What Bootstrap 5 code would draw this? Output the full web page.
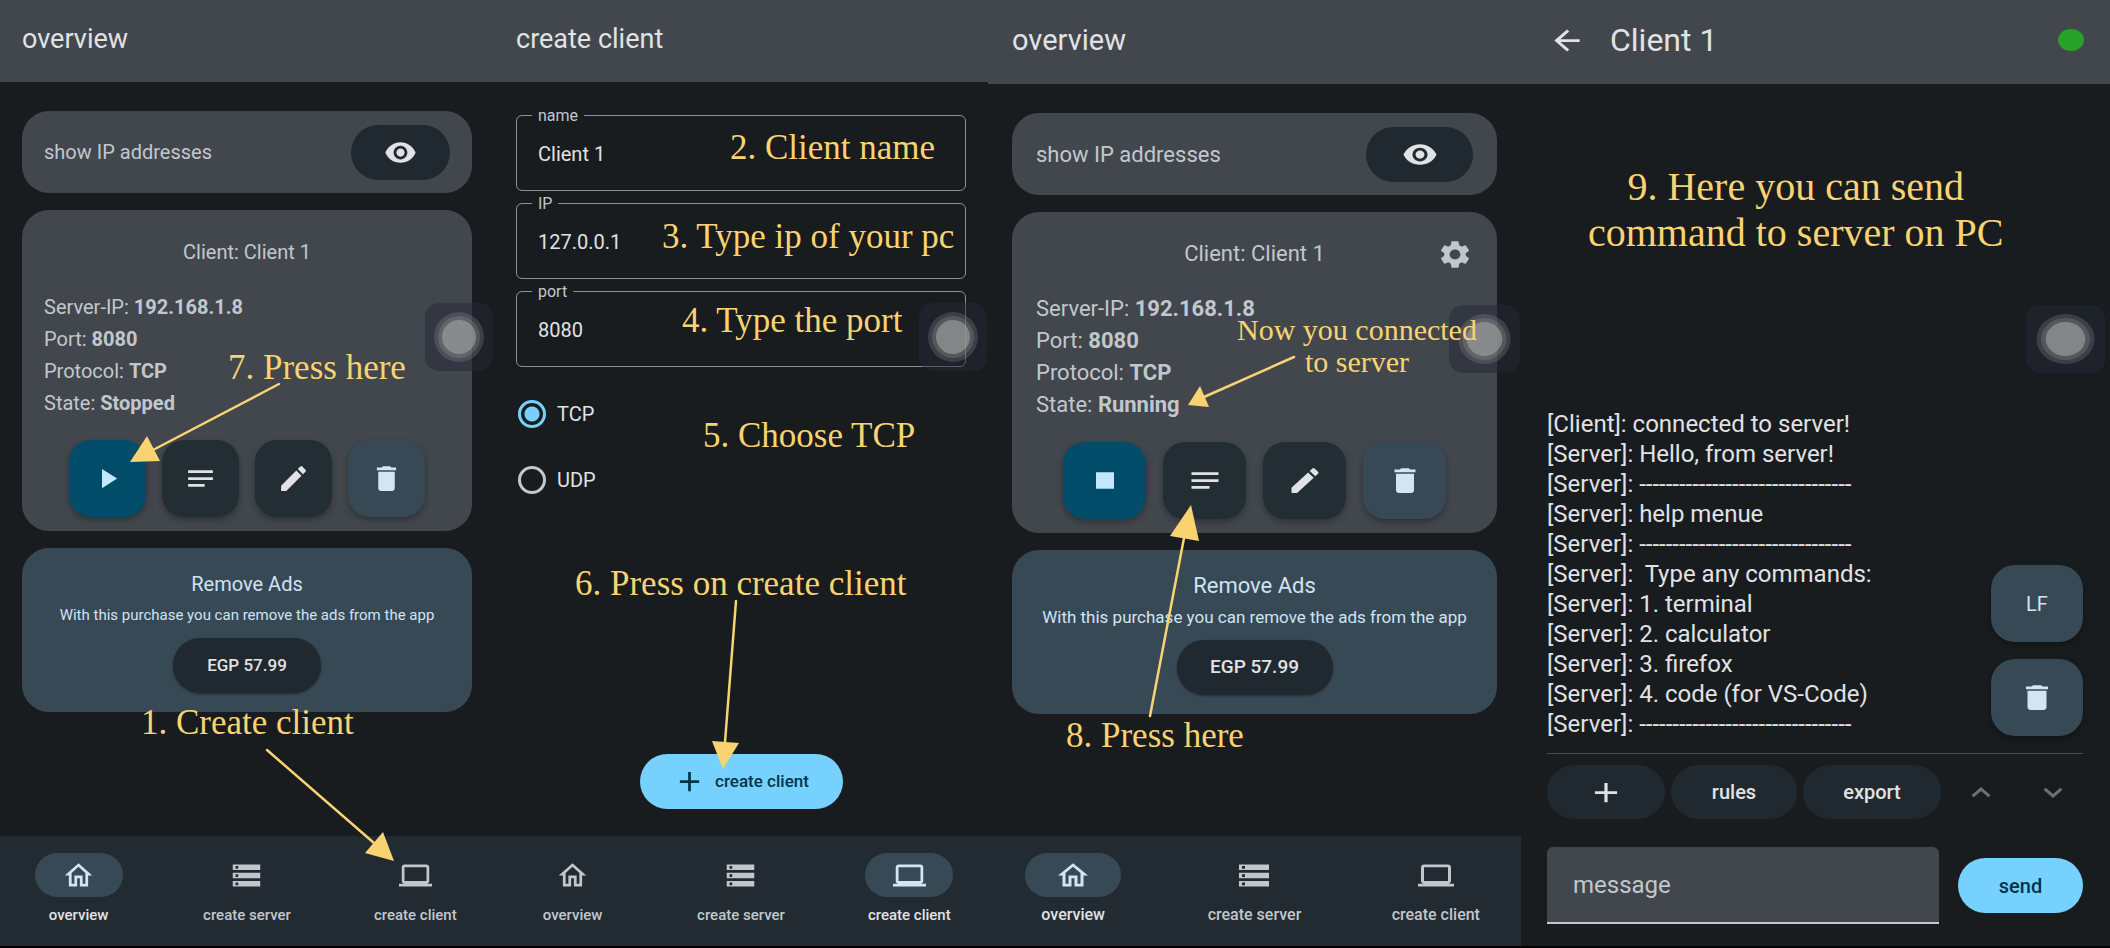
<!DOCTYPE html>
<html lang="en">
<head>
<meta charset="utf-8">
<meta name="viewport" content="width=device-width, initial-scale=1">
<title>Client setup guide</title>
<link href="https://cdn.jsdelivr.net/npm/bootstrap@5.3.0/dist/css/bootstrap.min.css" rel="stylesheet">
<style>
:root{--bg:#191c1e;--surface:#42474d;--tone:#384956;--deep:#20292f;--bar:#232b32;--ink:#e1e2e5;--soft:#c2c7ce;--sky:#77d1ff;--gold:#f9d372}
body{font-family:Roboto,"Liberation Sans",sans-serif;background:var(--bg);color:var(--ink)}
.guide{display:grid;grid-template-columns:494fr 494fr 533fr 589fr;min-height:100vh;border-bottom:2px solid #000}
.screen{--title:27px;--text:20px;--fine:15px;--label:17px;--tab:15px;--icon-w:33px;--pad:22px;--key-w:77px;--key-gap:16px;--pill-w:88px;--bar-h:82px;position:relative;display:flex;flex-direction:column;min-width:0;background:var(--bg)}
.screen-c{--title:29px;--text:22px;--fine:17px;--label:19px;--tab:16px;--icon-w:36px;--pad:24px;--key-w:83px;--key-gap:17px;--pill-w:96px;--bar-h:84px}
.screen-d{--title:32px;--text:24px;--label:20px;--icon-w:38px;--pad:26px;--key-w:92px;--bar-h:84px}
.topbar{height:var(--bar-h);padding:0 var(--pad) 4px;background:var(--surface);flex:none}
.topbar h1{font-size:var(--title);line-height:40px;font-weight:400;margin:0}
.icon{width:var(--icon-w);height:33px;fill:currentColor;display:block;flex:none}
.screen button,.screen .tab{border:0;padding:0;display:flex;align-items:center;justify-content:center}
.pane{padding:29px var(--pad) 0;gap:17px}
.tile{border-radius:27px;background:var(--surface);color:var(--soft);font-size:var(--text)}
.tile-row{height:82px;padding:0 var(--pad)}
.tile-main{padding:22px var(--pad) 14px}
.tile-ads{padding:24px 8px 19px;background:var(--tone);color:#cfe3f3;text-align:center}
.tile-title{line-height:40px;margin-bottom:19px;font-size:var(--text)}
.facts{line-height:32px;margin-bottom:21px}
.facts b{font-weight:700}
.eye{width:calc(var(--pill-w) + 11px);height:55px;border-radius:28px;background:var(--deep);color:var(--ink)}
.keys{gap:var(--key-gap)}
.key{width:var(--key-w);height:77px;border-radius:22px;background:#222d34;color:var(--ink);box-shadow:0 3px 6px rgba(0,0,0,.3)}
.key-go{background:#004c69;color:#c3e7ff}
.key-tone{background:var(--tone);color:#d3e5f5}
.ads-title{line-height:24px;margin-bottom:9px;font-size:var(--text)}
.ads-text{line-height:20px;margin-bottom:13px;font-size:var(--fine);white-space:nowrap}
.price{height:55px;padding:0;width:calc(var(--pill-w) + 60px);border-radius:28px;background:var(--deep);color:var(--ink);font-size:var(--label);font-weight:500;box-shadow:0 1px 3px rgba(0,0,0,.4)}
.tabs{display:grid;grid-template-columns:repeat(3,1fr);gap:11px;height:110px;padding-top:17px;background:var(--bar);margin-top:auto;flex:none}
.screen .tab{flex-direction:column;justify-content:flex-start;gap:8px;color:var(--soft);text-decoration:none;font-size:var(--tab);font-weight:500;line-height:20px}
.tab span{display:flex;align-items:center;justify-content:center;width:var(--pill-w);height:44px;border-radius:22px}
.tab.active{color:var(--ink)}
.tab.active span{background:var(--tone);color:#d3e5f5}
.field{position:relative}
.field label{position:absolute;left:16px;top:-9px;padding:0 6px;background:var(--bg);font-size:16px;line-height:20px;color:var(--soft)}
.field input{width:100%;height:76px;padding:2px 21px 0;border:1px solid #8c9198;border-radius:6px;background:transparent;color:var(--ink);font-size:20px;outline:0}
.fields{padding:33px var(--pad) 14px;gap:12px}
.choice{height:66px;padding-left:24px;gap:11px;font-size:20px}
.choice input{appearance:none;width:28px;height:28px;margin:0;border:3px solid var(--soft);border-radius:50%}
.choice input:checked{border-color:var(--sky);background:radial-gradient(circle,var(--sky) 7px,transparent 8px)}
.create{width:203px;height:55px;margin:auto auto 27px;gap:9px;border-radius:28px;background:var(--sky);color:#003549;font-size:17px;font-weight:500}
.create + .tabs{margin-top:0}
.assist{position:absolute;top:303px;right:1px;width:68px;height:68px;border-radius:14px;background:rgba(36,40,54,.5)}
.assist svg{width:100%;height:100%;display:block}
.screen-c .assist{top:305px;width:71px}
.screen-d .assist{top:305px;right:5px;width:79px}
.chatbar{gap:24px;padding-left:27px}
.dot{width:26px;height:22px;border-radius:50%;background:#28a228}
.console{padding:0 27px 14px 26px;margin-top:auto}
.log{font-size:var(--text);line-height:30px;white-space:pre}
.fabs{gap:17px;padding-bottom:3px}
.fabs .key{border-radius:24px;font-size:20px}
.tools{margin:0 27px 0 26px;border-top:1px solid #4a4f54;padding-top:11px;gap:6px}
.tool{height:54px;border-radius:27px;background:var(--deep);color:var(--ink);font-size:var(--label);font-weight:500}
.tool-add{width:118px}.tool-rules{width:126px}.tool-export{width:138px}
.steps{gap:12px}
.step{width:60px;height:54px;background:transparent;color:#6d7174}
.composer{margin:28px 27px 22px 26px;gap:19px}
.composer input{flex:1;min-width:0;height:77px;padding:0 26px;border:0;border-bottom:2px solid var(--soft);border-radius:6px 6px 0 0;background:var(--surface);color:var(--ink);font-size:var(--text);outline:0}
.composer input::placeholder{color:var(--soft);opacity:1}
.send{width:125px;height:55px;border-radius:28px;background:var(--sky);color:#003549;font-size:var(--label);font-weight:500}
/* hand-placed guide notes that lie over the screens */
.note{position:absolute;margin:0;color:var(--gold);font-family:"Liberation Serif",serif;font-size:35px;line-height:40px;white-space:nowrap;z-index:3}
.note-state{font-size:30px;line-height:32px;text-align:center}
.note-chat{font-size:40px;line-height:46px;text-align:center}
.n1{left:141px;top:703px}.n7{left:228px;top:348px}
.n2{left:236px;top:128px}.n3{left:168px;top:217px}.n4{left:188px;top:301px}.n5{left:209px;top:416px}.n6{left:81px;top:564px}
.n8{left:78px;top:716px}.ns{left:249px;top:314px}.n9{left:67px;top:164px}
.arrows{position:absolute;left:0;top:0;width:100%;height:100%;overflow:visible;pointer-events:none;fill:var(--gold);stroke:var(--gold);stroke-width:2.5;stroke-linecap:round;z-index:3}
.arrows polygon{stroke:none}
</style>
</head>
<body>
<svg class="d-none" aria-hidden="true">
<defs>
<path id="i-eye" d="M12 4.5C7 4.500 2.730 7.610 1 12c1.730 4.390 6 7.500 11 7.500s9.270-3.110 11-7.500c-1.730-4.390-6-7.500-11-7.500zM12 17c-2.760 0-5-2.240-5-5s2.240-5 5-5 5 2.240 5 5-2.240 5-5 5zm0-8c-1.660 0-3 1.340-3 3s1.340 3 3 3 3-1.340 3-3-1.340-3-3-3z"/>
<path id="i-play" d="M8 5v14l11-7z"/>
<path id="i-stop" d="M6 6h12v12H6z"/>
<path id="i-notes" d="M3 18h12v-2H3v2zM3 6v2h18V6H3zm0 7h18v-2H3v2z"/>
<path id="i-edit" d="M3 17.250V21h3.750L17.810 9.940l-3.750-3.750L3 17.250zM20.710 7.040c.39-.39.39-1.020 0-1.410l-2.340-2.340a.996.996 0 0 0-1.410 0l-1.830 1.830 3.750 3.750 1.830-1.830z"/>
<path id="i-trash" d="M6 19c0 1.100.9 2 2 2h8c1.100 0 2-.9 2-2V7H6v12zM19 4h-3.500l-1-1h-5l-1 1H5v2h14V4z"/>
<path id="i-home" d="M12 5.690l5 4.500V18h-2v-6H9v6H7v-7.810l5-4.500M12 3L2 12h3v8h6v-6h2v6h6v-8h3L12 3z"/>
<path id="i-server" d="M2 20h20v-4H2v4zm2-3h2v2H4v-2zM2 4v4h20V4H2zm4 3H4V5h2v2zm-4 7h20v-4H2v4zm2-3h2v2H4v-2z"/>
<path id="i-laptop" d="M20 18c1.100 0 1.990-.9 1.990-2L22 6c0-1.100-.9-2-2-2H4c-1.100 0-2 .9-2 2v10c0 1.100.9 2 2 2H0v2h24v-2h-4zM4 6h16v10H4V6z"/>
<path id="i-add" d="M19 13h-6v6h-2v-6H5v-2h6V5h2v6h6v2z"/>
<path id="i-back" d="M20 11H7.830l5.590-5.590L12 4l-8 8 8 8 1.410-1.410L7.830 13H20v-2z"/>
<path id="i-up" d="M12 8l-6 6 1.410 1.410L12 10.830l4.590 4.580L18 14z"/>
<path id="i-down" d="M16.590 8.590L12 13.170 7.410 8.590 6 10l6 6 6-6z"/>
<path id="i-gear" d="M19.140 12.940c.04-.3.060-.61.060-.94 0-.32-.02-.64-.07-.94l2.030-1.580c.18-.14.23-.41.120-.61l-1.920-3.320c-.12-.22-.37-.29-.59-.22l-2.390.96c-.5-.38-1.030-.7-1.620-.94l-.36-2.540c-.04-.24-.24-.41-.48-.41h-3.840c-.24 0-.43.17-.47.41l-.36 2.540c-.59.24-1.130.57-1.620.94l-2.390-.96c-.22-.08-.47 0-.59.22L2.740 8.870c-.12.21-.08.47.12.610l2.030 1.580c-.05.3-.09.63-.09.940s.02.640.070.940l-2.030 1.580c-.18.14-.23.41-.12.610l1.920 3.320c.12.220.37.290.59.220l2.390-.96c.5.380 1.030.700 1.620.940l.36 2.540c.05.240.24.410.48.410h3.840c.24 0 .44-.17.47-.41l.36-2.540c.59-.24 1.130-.56 1.620-.94l2.390.96c.22.080.47 0 .59-.22l1.920-3.320c.12-.22.070-.47-.12-.61l-2.010-1.580zM12 15.600c-1.980 0-3.600-1.620-3.600-3.600s1.620-3.600 3.600-3.600 3.600 1.620 3.600 3.600-1.620 3.600-3.600 3.600z"/>
<g id="i-touch"><circle cx="34" cy="34" r="25" fill="#aaa" fill-opacity=".22"/><circle cx="34" cy="34" r="21" fill="#bbb" fill-opacity=".2"/><circle cx="34" cy="34" r="17" fill="#a0a2a2" fill-opacity=".62"/></g>
</defs>
</svg>

<main class="guide">
  <section class="screen screen-a">
    <header class="topbar d-flex align-items-center"><h1>overview</h1></header>
    <div class="pane d-flex flex-column">
      <div class="tile tile-row d-flex align-items-center justify-content-between"><span>show IP addresses</span>
        <button class="eye" type="button" aria-label="Show IP addresses"><svg class="icon" viewBox="0 0 24 24"><use href="#i-eye"/></svg></button></div>
      <div class="tile tile-main">
        <div class="tile-title text-center">Client: Client 1</div>
        <div class="facts"><div>Server-IP: <b>192.168.1.8</b></div><div>Port: <b>8080</b></div><div>Protocol: <b>TCP</b></div><div>State: <b>Stopped</b></div></div>
        <div class="keys d-flex justify-content-center">
          <button class="key key-go" type="button" aria-label="Start"><svg class="icon" viewBox="0 0 24 24"><use href="#i-play"/></svg></button>
          <button class="key" type="button" aria-label="Console"><svg class="icon" viewBox="0 0 24 24"><use href="#i-notes"/></svg></button>
          <button class="key" type="button" aria-label="Edit"><svg class="icon" viewBox="0 0 24 24"><use href="#i-edit"/></svg></button>
          <button class="key key-tone" type="button" aria-label="Delete"><svg class="icon" viewBox="0 0 24 24"><use href="#i-trash"/></svg></button>
        </div>
      </div>
      <div class="tile tile-ads">
        <div class="ads-title">Remove Ads</div>
        <div class="ads-text">With this purchase you can remove the ads from the app</div>
        <button class="price mx-auto" type="button">EGP 57.99</button>
      </div>
    </div>
    <nav class="tabs">
      <a class="tab active" href="#"><span><svg class="icon" viewBox="0 0 24 24"><use href="#i-home"/></svg></span>overview</a>
      <a class="tab" href="#"><span><svg class="icon" viewBox="0 0 24 24"><use href="#i-server"/></svg></span>create server</a>
      <a class="tab" href="#"><span><svg class="icon" viewBox="0 0 24 24"><use href="#i-laptop"/></svg></span>create client</a>
    </nav>
    <div class="assist"><svg viewBox="0 0 68 68" preserveAspectRatio="none"><use href="#i-touch"/></svg></div>
    <p class="note n7">7. Press here</p>
    <p class="note n1">1. Create client</p>
    <svg class="arrows" aria-hidden="true"><path d="M279 384L153 450M267 750L374 843"/><polygon points="130,462 147,436 160,461"/><polygon points="394,861 383,832 365,853"/></svg>
  </section>

  <section class="screen screen-b">
    <header class="topbar d-flex align-items-center"><h1>create client</h1></header>
    <div class="fields d-flex flex-column">
      <div class="field"><input id="f-name" type="text" value="Client 1"><label for="f-name">name</label></div>
      <div class="field"><input id="f-ip" type="text" value="127.0.0.1"><label for="f-ip">IP</label></div>
      <div class="field"><input id="f-port" type="text" value="8080"><label for="f-port">port</label></div>
    </div>
    <div class="choice d-flex align-items-center"><input id="r-tcp" type="radio" name="proto" checked><label for="r-tcp">TCP</label></div>
    <div class="choice d-flex align-items-center"><input id="r-udp" type="radio" name="proto"><label for="r-udp">UDP</label></div>
    <button class="create" type="button"><svg class="icon" viewBox="0 0 24 24"><use href="#i-add"/></svg>create client</button>
    <nav class="tabs">
      <a class="tab" href="#"><span><svg class="icon" viewBox="0 0 24 24"><use href="#i-home"/></svg></span>overview</a>
      <a class="tab" href="#"><span><svg class="icon" viewBox="0 0 24 24"><use href="#i-server"/></svg></span>create server</a>
      <a class="tab active" href="#"><span><svg class="icon" viewBox="0 0 24 24"><use href="#i-laptop"/></svg></span>create client</a>
    </nav>
    <div class="assist"><svg viewBox="0 0 68 68" preserveAspectRatio="none"><use href="#i-touch"/></svg></div>
    <p class="note n2">2. Client name</p>
    <p class="note n3">3. Type ip of your pc</p>
    <p class="note n4">4. Type the port</p>
    <p class="note n5">5. Choose TCP</p>
    <p class="note n6">6. Press on create client</p>
    <svg class="arrows" aria-hidden="true"><path d="M242 601L231 742"/><polygon points="229,769 218,741 245,743"/></svg>
  </section>

  <section class="screen screen-c">
    <header class="topbar d-flex align-items-center"><h1>overview</h1></header>
    <div class="pane d-flex flex-column">
      <div class="tile tile-row d-flex align-items-center justify-content-between"><span>show IP addresses</span>
        <button class="eye" type="button" aria-label="Show IP addresses"><svg class="icon" viewBox="0 0 24 24" preserveAspectRatio="none"><use href="#i-eye"/></svg></button></div>
      <div class="tile tile-main">
        <div class="tile-title row g-0 align-items-center"><span class="col-2"></span><span class="col-8 text-center">Client: Client 1</span>
          <span class="col-2 d-flex justify-content-end"><button class="bg-transparent text-reset" type="button" aria-label="Settings"><svg class="icon" viewBox="0 0 24 24" preserveAspectRatio="none"><use href="#i-gear"/></svg></button></span></div>
        <div class="facts"><div>Server-IP: <b>192.168.1.8</b></div><div>Port: <b>8080</b></div><div>Protocol: <b>TCP</b></div><div>State: <b>Running</b></div></div>
        <div class="keys d-flex justify-content-center">
          <button class="key key-go" type="button" aria-label="Stop"><svg class="icon" viewBox="0 0 24 24" preserveAspectRatio="none"><use href="#i-stop"/></svg></button>
          <button class="key" type="button" aria-label="Console"><svg class="icon" viewBox="0 0 24 24" preserveAspectRatio="none"><use href="#i-notes"/></svg></button>
          <button class="key" type="button" aria-label="Edit"><svg class="icon" viewBox="0 0 24 24" preserveAspectRatio="none"><use href="#i-edit"/></svg></button>
          <button class="key key-tone" type="button" aria-label="Delete"><svg class="icon" viewBox="0 0 24 24" preserveAspectRatio="none"><use href="#i-trash"/></svg></button>
        </div>
      </div>
      <div class="tile tile-ads">
        <div class="ads-title">Remove Ads</div>
        <div class="ads-text">With this purchase you can remove the ads from the app</div>
        <button class="price mx-auto" type="button">EGP 57.99</button>
      </div>
    </div>
    <nav class="tabs">
      <a class="tab active" href="#"><span><svg class="icon" viewBox="0 0 24 24" preserveAspectRatio="none"><use href="#i-home"/></svg></span>overview</a>
      <a class="tab" href="#"><span><svg class="icon" viewBox="0 0 24 24" preserveAspectRatio="none"><use href="#i-server"/></svg></span>create server</a>
      <a class="tab" href="#"><span><svg class="icon" viewBox="0 0 24 24" preserveAspectRatio="none"><use href="#i-laptop"/></svg></span>create client</a>
    </nav>
    <div class="assist"><svg viewBox="0 0 68 68" preserveAspectRatio="none"><use href="#i-touch"/></svg></div>
    <p class="note note-state ns">Now you connected<br>to server</p>
    <p class="note n8">8. Press here</p>
    <svg class="arrows" aria-hidden="true"><path d="M306 357L216 397M162 716L196 538"/><polygon points="200,405 212,386 221,407"/><polygon points="203,505 182,536 211,541"/></svg>
  </section>

  <section class="screen screen-d">
    <header class="topbar chatbar d-flex align-items-center">
      <button class="bg-transparent text-reset" type="button" aria-label="Back"><svg class="icon" viewBox="0 0 24 24" preserveAspectRatio="none"><use href="#i-back"/></svg></button>
      <h1>Client 1</h1><span class="dot ms-auto"></span>
    </header>
    <div class="console d-flex align-items-end justify-content-between">
      <div class="log"><div>[Client]: connected to server!</div><div>[Server]: Hello, from server!</div><div>[Server]: --------------------------------</div><div>[Server]: help menue</div><div>[Server]: --------------------------------</div><div>[Server]:  Type any commands:</div><div>[Server]: 1. terminal</div><div>[Server]: 2. calculator</div><div>[Server]: 3. firefox</div><div>[Server]: 4. code (for VS-Code)</div><div>[Server]: --------------------------------</div></div>
      <div class="fabs d-flex flex-column">
        <button class="key key-tone" type="button">LF</button>
        <button class="key key-tone" type="button" aria-label="Clear"><svg class="icon" viewBox="0 0 24 24" preserveAspectRatio="none"><use href="#i-trash"/></svg></button>
      </div>
    </div>
    <div class="tools d-flex align-items-center">
      <button class="tool tool-add" type="button" aria-label="Add"><svg class="icon" viewBox="0 0 24 24" preserveAspectRatio="none"><use href="#i-add"/></svg></button>
      <button class="tool tool-rules" type="button">rules</button>
      <button class="tool tool-export" type="button">export</button>
      <div class="steps d-flex ms-auto"><button class="step" type="button" aria-label="Previous"><svg class="icon" viewBox="0 0 24 24" preserveAspectRatio="none"><use href="#i-up"/></svg></button><button class="step" type="button" aria-label="Next"><svg class="icon" viewBox="0 0 24 24" preserveAspectRatio="none"><use href="#i-down"/></svg></button></div>
    </div>
    <form class="composer d-flex align-items-center">
      <input type="text" placeholder="message" aria-label="message">
      <button class="send" type="button">send</button>
    </form>
    <div class="assist"><svg viewBox="0 0 68 68" preserveAspectRatio="none"><use href="#i-touch"/></svg></div>
    <p class="note note-chat n9">9. Here you can send<br>command to server on PC</p>
  </section>
</main>
<script src="https://cdn.jsdelivr.net/npm/bootstrap@5.3.0/dist/js/bootstrap.bundle.min.js"></script>
</body>
</html>
